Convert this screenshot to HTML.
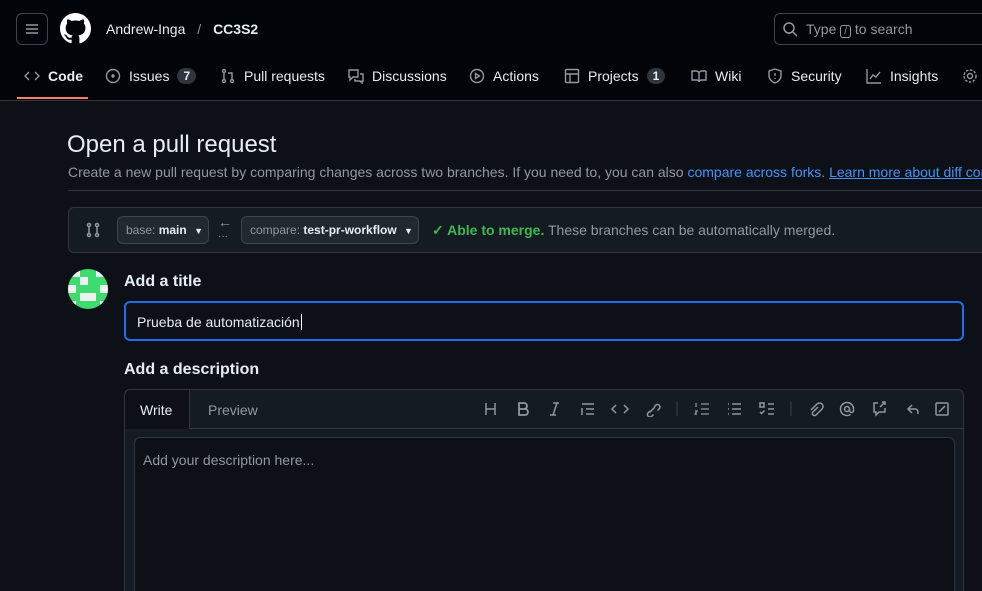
<!DOCTYPE html>
<html><head><meta charset="utf-8"><style>
*{box-sizing:border-box;margin:0;padding:0}
html{width:982px;height:591px;overflow:hidden}
body{width:982px;height:591px;overflow:hidden;background:#0d1117;font-family:"Liberation Sans",sans-serif;color:#e6edf3;position:relative}
.hdr{position:absolute;left:0;top:0;width:982px;height:101px;background:#010409;border-bottom:1px solid #30363d;overflow:hidden}
.abs{position:absolute}
.nav{position:absolute;top:68px;font-size:14px;color:#e6edf3;display:flex;align-items:center;gap:8px;white-space:nowrap}
.nav svg{stroke:#9198a1;fill:none;stroke-width:1.4}
.cnt{background:#2f353d;border-radius:10px;padding:1px 6px;font-size:12px;font-weight:bold}
.ic{stroke:#9198a1;fill:none;stroke-width:1.5}
</style></head><body>
<div class="hdr">
 <div class="abs" style="left:16px;top:13px;width:32px;height:32px;border:1px solid #3d444d;border-radius:6px"></div>
 <svg class="abs" style="left:24px;top:21px" width="16" height="16"><path d="M2 4h12M2 8h12M2 12h12" stroke="#9198a1" stroke-width="1.5"/></svg>
 <svg class="abs" style="left:60px;top:13px" width="31" height="31" viewBox="0 0 16 16"><path fill="#fff" d="M8 0C3.58 0 0 3.58 0 8c0 3.540 2.29 6.53 5.47 7.59.4.07.55-.17.55-.38 0-.19-.01-.82-.01-1.49-2.01.37-2.53-.49-2.69-.94-.09-.23-.48-.94-.82-1.130-.28-.15-.68-.52-.01-.53.63-.01 1.08.58 1.23.82.72 1.21 1.87.87 2.33.66.07-.52.28-.87.51-1.07-1.78-.2-3.64-.89-3.64-3.95 0-.87.31-1.59.82-2.15-.08-.2-.36-1.02.08-2.12 0 0 .67-.21 2.2.82.64-.18 1.32-.27 2-.27.68 0 1.36.09 2 .27 1.53-1.04 2.2-.82 2.2-.82.44 1.1.16 1.92.08 2.12.51.56.82 1.27.82 2.15 0 3.07-1.87 3.750-3.65 3.95.29.25.54.73.54 1.48 0 1.07-.01 1.93-.01 2.2 0 .21.15.46.55.38A8.013 8.013 0 0016 8c0-4.42-3.58-8-8-8z"/></svg>
 <div class="abs" style="left:106px;top:21px;font-size:14px;white-space:nowrap">Andrew-Inga <span style="color:#9198a1;margin:0 8px">/</span> <b>CC3S2</b></div>
 <div class="abs" style="left:774px;top:13px;width:220px;height:32px;border:1px solid #3d444d;border-radius:6px;font-size:14px;color:#9198a1;padding:7px 0 0 31px;white-space:nowrap">Type <span style="border:1px solid #9198a1;border-radius:3px;font-size:10px;padding:0 3px">/</span> to search</div>
 <svg class="abs ic" style="left:782px;top:21px" width="16" height="16"><circle cx="7" cy="7" r="5"/><path d="M11 11l4 4"/></svg>
 <div class="nav" style="left:24px"><svg width="16" height="16"><path d="M5 4L1 8l4 4M11 4l4 4-4 4"/></svg><b>Code</b></div>
 <div class="abs" style="left:17px;top:97px;width:71px;height:2px;background:#f78166"></div>
 <div class="nav" style="left:105px"><svg width="16" height="16"><circle cx="8" cy="8" r="6.5"/><circle cx="8" cy="8" r="1" fill="#9198a1"/></svg>Issues <span class="cnt">7</span></div>
 <div class="nav" style="left:220px"><svg width="16" height="16"><circle cx="4" cy="3" r="1.5"/><circle cx="4" cy="13" r="1.5"/><circle cx="12" cy="13" r="1.5"/><path d="M4 5v6M12 11V5H8"/></svg>Pull requests</div>
 <div class="nav" style="left:348px"><svg width="16" height="16"><path d="M1 2h9v7H5l-3 3V9H1zM12 6h3v7h-1v2l-2-2H7v-2"/></svg>Discussions</div>
 <div class="nav" style="left:469px"><svg width="16" height="16"><circle cx="8" cy="8" r="6.5"/><path d="M6.5 5.5v5l4-2.5z"/></svg>Actions</div>
 <div class="nav" style="left:564px"><svg width="16" height="16"><rect x="1.5" y="1.5" width="13" height="13" rx="1"/><path d="M1.5 6h13M6 6v8.5"/></svg>Projects <span class="cnt">1</span></div>
 <div class="nav" style="left:691px"><svg width="16" height="16"><path d="M1 3h4c1.5 0 3 1 3 2.5V14c0-1-1-2-2.5-2H1zM15 3h-4C9.5 3 8 4 8 5.5"/><path d="M15 3v9h-4.5C9 12 8 13 8 14"/></svg>Wiki</div>
 <div class="nav" style="left:767px"><svg width="16" height="16"><path d="M8 1l6 2v5c0 3-3 6-6 7-3-1-6-4-6-7V3z"/><path d="M8 5v3M8 10v1"/></svg>Security</div>
 <div class="nav" style="left:866px"><svg width="16" height="16"><path d="M1 1v14h14M4 11l3-4 3 2 4-5"/></svg>Insights</div>
 <div class="nav" style="left:962px"><svg width="16" height="16"><circle cx="8" cy="8" r="2.5"/><circle cx="8" cy="8" r="6" stroke-dasharray="2.5 1.5"/></svg></div>
</div>
<div class="abs" style="left:67px;top:131px;font-size:24px">Open a pull request</div>
<div class="abs" style="left:68px;top:164px;width:914px;overflow:hidden;font-size:14px;color:#9198a1;white-space:nowrap">Create a new pull request by comparing changes across two branches. If you need to, you can also <span style="color:#4493f8">compare across forks</span>. <span style="color:#4493f8;text-decoration:underline">Learn more about diff comparisons</span></div>
<div class="abs" style="left:68px;top:190px;width:914px;height:1px;background:#30363d"></div>
<div class="abs" style="left:68px;top:207px;width:914px;height:46px;background:#151b23;border:1px solid #30363d;border-right:none;border-radius:6px 0 0 6px"></div>
<svg class="abs ic" style="left:85px;top:222px" width="16" height="16"><circle cx="4" cy="3" r="1.5"/><circle cx="4" cy="13" r="1.5"/><circle cx="12" cy="13" r="1.5"/><circle cx="12" cy="3" r="1.5"/><path d="M4 5v6M12 11V5"/></svg>
<div class="abs" style="left:117px;top:216px;width:92px;height:28px;background:#212830;border:1px solid #3d444d;border-radius:6px;font-size:12px;color:#9198a1;padding:6px 0 0 8px;white-space:nowrap">base: <b style="color:#e6edf3">main</b> <span style="font-size:9px;margin-left:4px;color:#e6edf3">▼</span></div>
<div class="abs" style="left:218px;top:216px;color:#9198a1;font-size:14px;line-height:12px">←<br><span style="font-size:10px">···</span></div>
<div class="abs" style="left:241px;top:216px;width:178px;height:28px;background:#212830;border:1px solid #3d444d;border-radius:6px;font-size:12px;color:#9198a1;padding:6px 0 0 8px;white-space:nowrap">compare: <b style="color:#e6edf3">test-pr-workflow</b> <span style="font-size:9px;margin-left:4px;color:#e6edf3">▼</span></div>
<div class="abs" style="left:432px;top:222px;font-size:14px;color:#9198a1;white-space:nowrap"><span style="color:#3fb950;font-weight:bold">✓ Able to merge.</span> These branches can be automatically merged.</div>
<svg class="abs" style="left:68px;top:269px" width="40" height="40" viewBox="0 0 40 40"><clipPath id="c"><circle cx="20" cy="20" r="20"/></clipPath><g clip-path="url(#c)"><rect width="40" height="40" fill="#3ddc6e"/><g fill="#f0f0f0"><rect x="0" y="0" width="12" height="8"/><rect x="28" y="0" width="12" height="8"/><rect x="12" y="8" width="8" height="8"/><rect x="0" y="16" width="8" height="8"/><rect x="32" y="16" width="8" height="8"/><rect x="12" y="24" width="8" height="8"/><rect x="20" y="24" width="8" height="8"/><rect x="0" y="32" width="8" height="8"/><rect x="32" y="32" width="8" height="8"/></g></g></svg>
<div class="abs" style="left:124px;top:273px;font-size:16px;font-weight:bold">Add a title</div>
<div class="abs" style="left:124px;top:301px;width:840px;height:40px;border:2px solid #1f6feb;border-radius:6px;background:#0d1117;font-size:14px;padding:11px 0 0 11px">Prueba de automatización<span style="border-left:1px solid #fff;margin-left:1px"></span></div>
<div class="abs" style="left:124px;top:361px;font-size:16px;font-weight:bold">Add a description</div>
<div class="abs" style="left:124px;top:389px;width:840px;height:220px;border:1px solid #30363d;border-radius:6px;background:#151b23"></div>
<div class="abs" style="left:124px;top:428px;width:840px;height:1px;background:#30363d"></div>
<div class="abs" style="left:125px;top:390px;width:65px;height:39px;background:#0d1117;border-right:1px solid #30363d;border-radius:6px 0 0 0;font-size:14px;padding:12px 0 0 15px">Write</div>
<div class="abs" style="left:208px;top:402px;font-size:14px;color:#9198a1">Preview</div>
<svg class="abs ic" style="left:484px;top:401px" width="470" height="16">
<path d="M2 2v12M11 2v12M2 8h9"/>
<path d="M35 2h5a3 3 0 010 6h-5zM35 8h6a3 3 0 010 6h-6z" stroke-width="1.8"/>
<path d="M69 2h6M66 14h6M73 2l-4 12"/>
<path d="M98 3h12M98 7v7M102 8h8M102 13h8"/>
<path d="M132 4l-4 4 4 4M140 4l4 4-4 4"/>
<path d="M166 10l-2 2a2.5 2.5 0 003.5 3.5l2-2M170 6l2-2a2.5 2.5 0 013.5 3.5l-2 2M166 11l5-5"/>
<path d="M193 1v14" stroke="#30363d"/>
<path d="M217 3h8M217 8h8M217 13h8M212 2v4M211 10h2l-2 3h2" stroke-width="1.2"/>
<path d="M248 3h9M248 8h9M248 13h9M244 3h1M244 8h1M244 13h1"/>
<path d="M276 2h4v4h-4zM276 11l1.5 1.5 3-3M284 3h6M284 8h6M284 13h6"/>
<path d="M307 1v14" stroke="#30363d"/>
<path d="M334 6l-5 5a2 2 0 003 3l6-6a3.5 3.5 0 00-5-5l-6 6"/>
<circle cx="363" cy="8" r="2.5"/><path d="M365.5 8v1.5a2 2 0 004 0V8a6.5 6.5 0 10-3 5.5"/>
<path d="M394 2h-4v9h2v3l3-3h6V7M396 6l5-5M398 1h3v3"/>
<path d="M428 4l-4 4 4 4M424 8h7a3 3 0 013 3v2"/>
<rect x="452" y="2" width="12" height="12" rx="1"/><path d="M455 11l6-6"/>
</svg>
<div class="abs" style="left:134px;top:437px;width:821px;height:170px;border:1px solid #30363d;border-radius:6px;background:#0d1117;font-size:14px;color:#9198a1;padding:14px 0 0 8px">Add your description here...</div>
</body></html>
